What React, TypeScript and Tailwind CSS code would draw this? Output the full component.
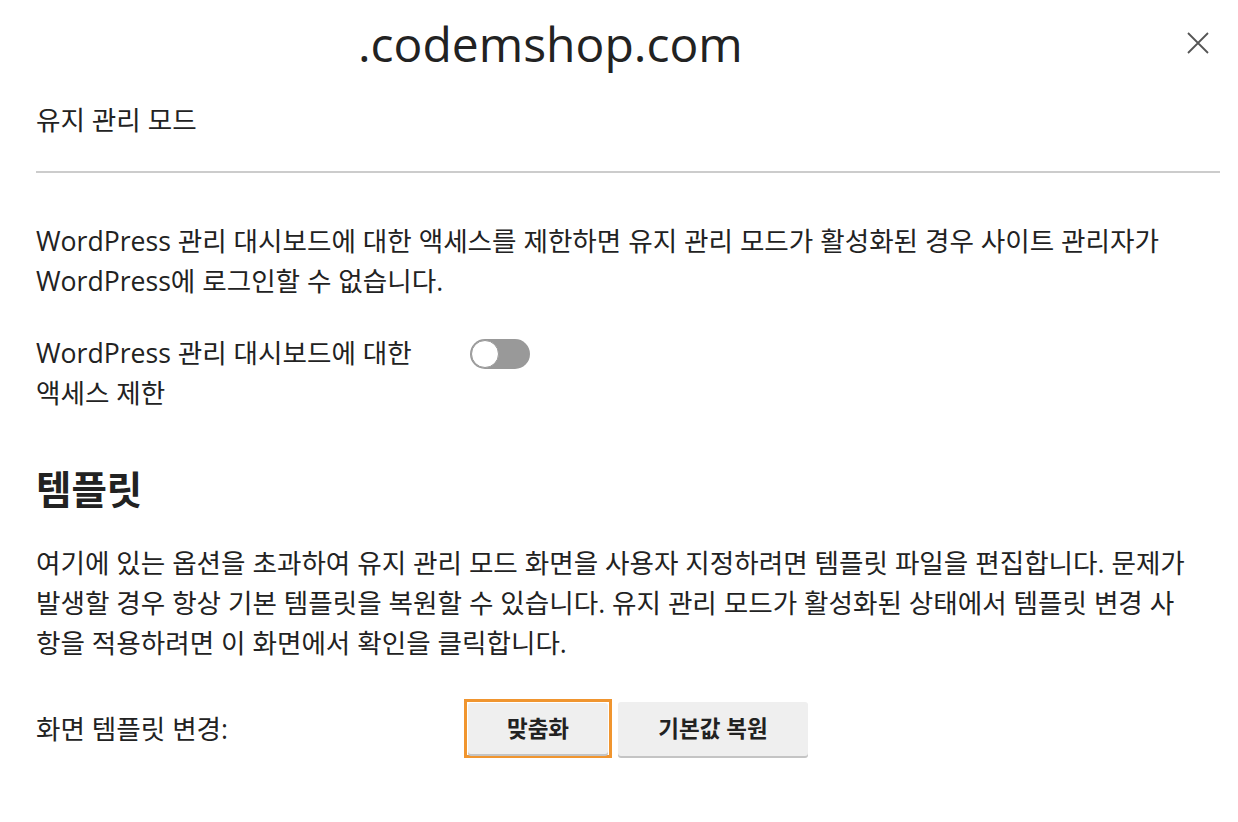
import React from "react";

const font = { fontFamily: '"Open Sans", "Noto Sans CJK KR", sans-serif' };

export default function App() {
  return (
    <div
      className="w-[1238px] h-[822px] bg-white text-[#222] overflow-hidden font-['Open_Sans','Noto_Sans_CJK_KR',sans-serif]"
      style={font}
    >
      <div className="flex items-start justify-between pl-[358px] pr-[26px] pt-[12px] h-[80px]">
        <div className="text-[48px] leading-[64px] text-[#222]">.codemshop.com</div>
        <button className="mt-[17px] w-[28px] h-[28px] flex items-center justify-center">
          <svg width="24" height="24" viewBox="0 0 24 24" fill="none" stroke="#555" strokeWidth="1.8">
            <path d="M2 2L22 22M22 2L2 22" />
          </svg>
        </button>
      </div>
      <div className="pl-[36px] pr-[18px]">
        <div className="mt-[20px] text-[26.6px] leading-[40px]">유지 관리 모드</div>
        <div className="mt-[31px] h-[2px] bg-[#cccccc]" />
        <p className="mt-[48px] text-[26.6px] leading-[40px]">
          WordPress 관리 대시보드에 대한 액세스를 제한하면 유지 관리 모드가 활성화된 경우 사이트 관리자가
          <br />
          WordPress에 로그인할 수 없습니다.
        </p>
        <div className="mt-[32px] flex items-start">
          <div className="w-[434px] text-[26.6px] leading-[40px]">
            WordPress 관리 대시보드에 대한
            <br />
            액세스 제한
          </div>
          <div className="mt-[6px] w-[60px] h-[30px] rounded-full bg-[#999] relative">
            <div className="absolute left-[1px] top-[1px] w-[28px] h-[28px] rounded-full bg-white border border-[#999]" />
          </div>
        </div>
        <h2 className="mt-[52px] text-[38.5px] leading-[48px] font-bold">템플릿</h2>
        <p className="mt-[30px] text-[26.6px] leading-[40px]">
          여기에 있는 옵션을 초과하여 유지 관리 모드 화면을 사용자 지정하려면 템플릿 파일을 편집합니다. 문제가
          <br />
          발생할 경우 항상 기본 템플릿을 복원할 수 있습니다. 유지 관리 모드가 활성화된 상태에서 템플릿 변경 사
          <br />
          항을 적용하려면 이 화면에서 확인을 클릭합니다.
        </p>
        <div className="mt-[36px] flex items-center">
          <div className="w-[428px] text-[26.6px] leading-[40px]">화면 템플릿 변경:</div>
          <div className="border-[3px] border-[#f0952f] p-[1px]">
            <button className="w-[140px] h-[51px] bg-[#efefef] rounded-[3px] shadow-[0_2px_0_#c4c4c4] text-[22.5px] font-bold text-[#222]">
              맞춤화
            </button>
          </div>
          <button className="ml-[6px] w-[190px] h-[54px] bg-[#efefef] rounded-[3px] shadow-[0_2px_0_#c4c4c4] text-[22.5px] font-bold text-[#222]">
            기본값 복원
          </button>
        </div>
      </div>
    </div>
  );
}
